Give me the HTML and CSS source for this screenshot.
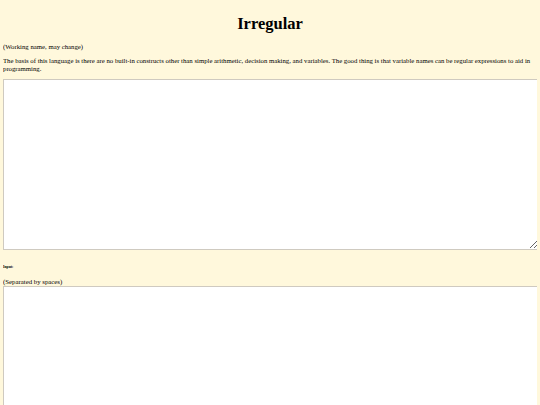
FILE: index.html
```html
<!DOCTYPE html>
<html>
<head>
<meta charset="utf-8">
<title>Irregular</title>
<link rel="stylesheet" href="styles.css">
</head>
<body>
<h1 class="title">Irregular</h1>
<p class="note note-first">(Working name, may change)</p>
<p class="note">The basis of this language is there are no built-in constructs other than simple arithmetic, decision making, and variables. The good thing is that variable names can be regular expressions to aid in programming.</p>
<textarea class="code"></textarea>
<h6 class="label">Input:</h6>
<div class="hint">(Separated by spaces)</div>
<textarea class="input"></textarea>
</body>
</html>
```
FILE: styles.css
```css
html {
  background: #fff8dc;
}
body {
  margin: 3px;
  font-family: "Liberation Serif", serif;
  color: #000;
  background: #fff8dc;
}
.title {
  font-size: 16.5px;
  line-height: 19px;
  text-align: center;
  margin: 11px 0 0;
}
.note {
  font-size: 6.75px;
  line-height: 8px;
  margin: 6px 0 0;
}
.note-first {
  margin-top: 10px;
}
.code {
  display: block;
  box-sizing: border-box;
  width: 536px;
  height: 171px;
  margin: 6px 0 0;
  border: 1px solid #cfcac0;
  background: #fff;
  resize: vertical;
}
.label {
  font-size: 3.8px;
  margin: 15px 0 0;
}
.hint {
  font-size: 6.8px;
  line-height: 8px;
  margin-top: 9px;
}
.input {
  display: block;
  box-sizing: border-box;
  width: 536px;
  height: 171px;
  margin: 0;
  border: 1px solid #cfcac0;
  background: #fff;
}
```
